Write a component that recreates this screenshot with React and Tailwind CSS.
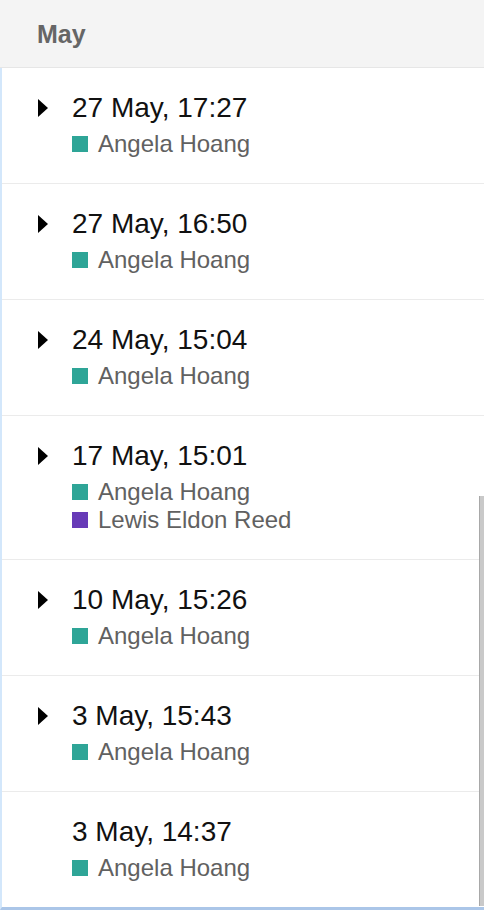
import React from 'react';

const entries = [
  { date: '27 May, 17:27', people: ['angela'], expandable: true },
  { date: '27 May, 16:50', people: ['angela'], expandable: true },
  { date: '24 May, 15:04', people: ['angela'], expandable: true },
  { date: '17 May, 15:01', people: ['angela', 'lewis'], expandable: true },
  { date: '10 May, 15:26', people: ['angela'], expandable: true },
  { date: '3 May, 15:43', people: ['angela'], expandable: true },
  { date: '3 May, 14:37', people: ['angela'], expandable: false },
];

const people = {
  angela: { name: 'Angela Hoang', color: 'bg-[#2ea597]' },
  lewis: { name: 'Lewis Eldon Reed', color: 'bg-[#673ab7]' },
};

const Caret = () => (
  <svg width="10" height="18" viewBox="0 0 10 18" className="block">
    <path d="M0 0 L10 9 L0 18 Z" fill="#000" />
  </svg>
);

const App = () => {
  return (
    <div className="relative flex h-[910px] w-full flex-col overflow-hidden bg-white font-['Liberation_Sans',Arial,sans-serif]">
      <div className="flex h-[68px] shrink-0 items-center border-b border-[#e6e6e6] bg-[#f4f4f4] pl-[37px]">
        <h2 className="text-[25px] font-bold leading-[28px] text-[#666666]">May</h2>
      </div>

      <div className="flex-1 border-b-[3px] border-l-2 border-b-[#abc6e8] border-l-[#d3e7fb]">
        {entries.map((e, i) => (
          <div
            key={i}
            className={`flex pt-[24px] pb-[25px] ${i < entries.length - 1 ? 'border-b border-[#ebebeb]' : ''}`}
          >
            <div className="flex w-[70px] shrink-0 justify-end pr-[24px] pt-[7px]">
              {e.expandable && <Caret />}
            </div>
            <div className="flex flex-col">
              <div className="text-[28px] leading-[32px] text-[#111]">{e.date}</div>
              <div className="mt-[6px] flex flex-col">
                {e.people.map((p) => (
                  <div key={p} className="flex items-center gap-[10px] text-[24px] leading-[28px] text-[#616161]">
                    <span className={`h-4 w-4 shrink-0 ${people[p].color}`} />
                    <span>{people[p].name}</span>
                  </div>
                ))}
              </div>
            </div>
          </div>
        ))}
      </div>

      {/* scrollbar */}
      <div className="absolute right-0 top-[496px] h-[410px] w-[5px] border-l border-[#a8a8a8] bg-[#c9c9c9]" />
    </div>
  );
};

export default App;
